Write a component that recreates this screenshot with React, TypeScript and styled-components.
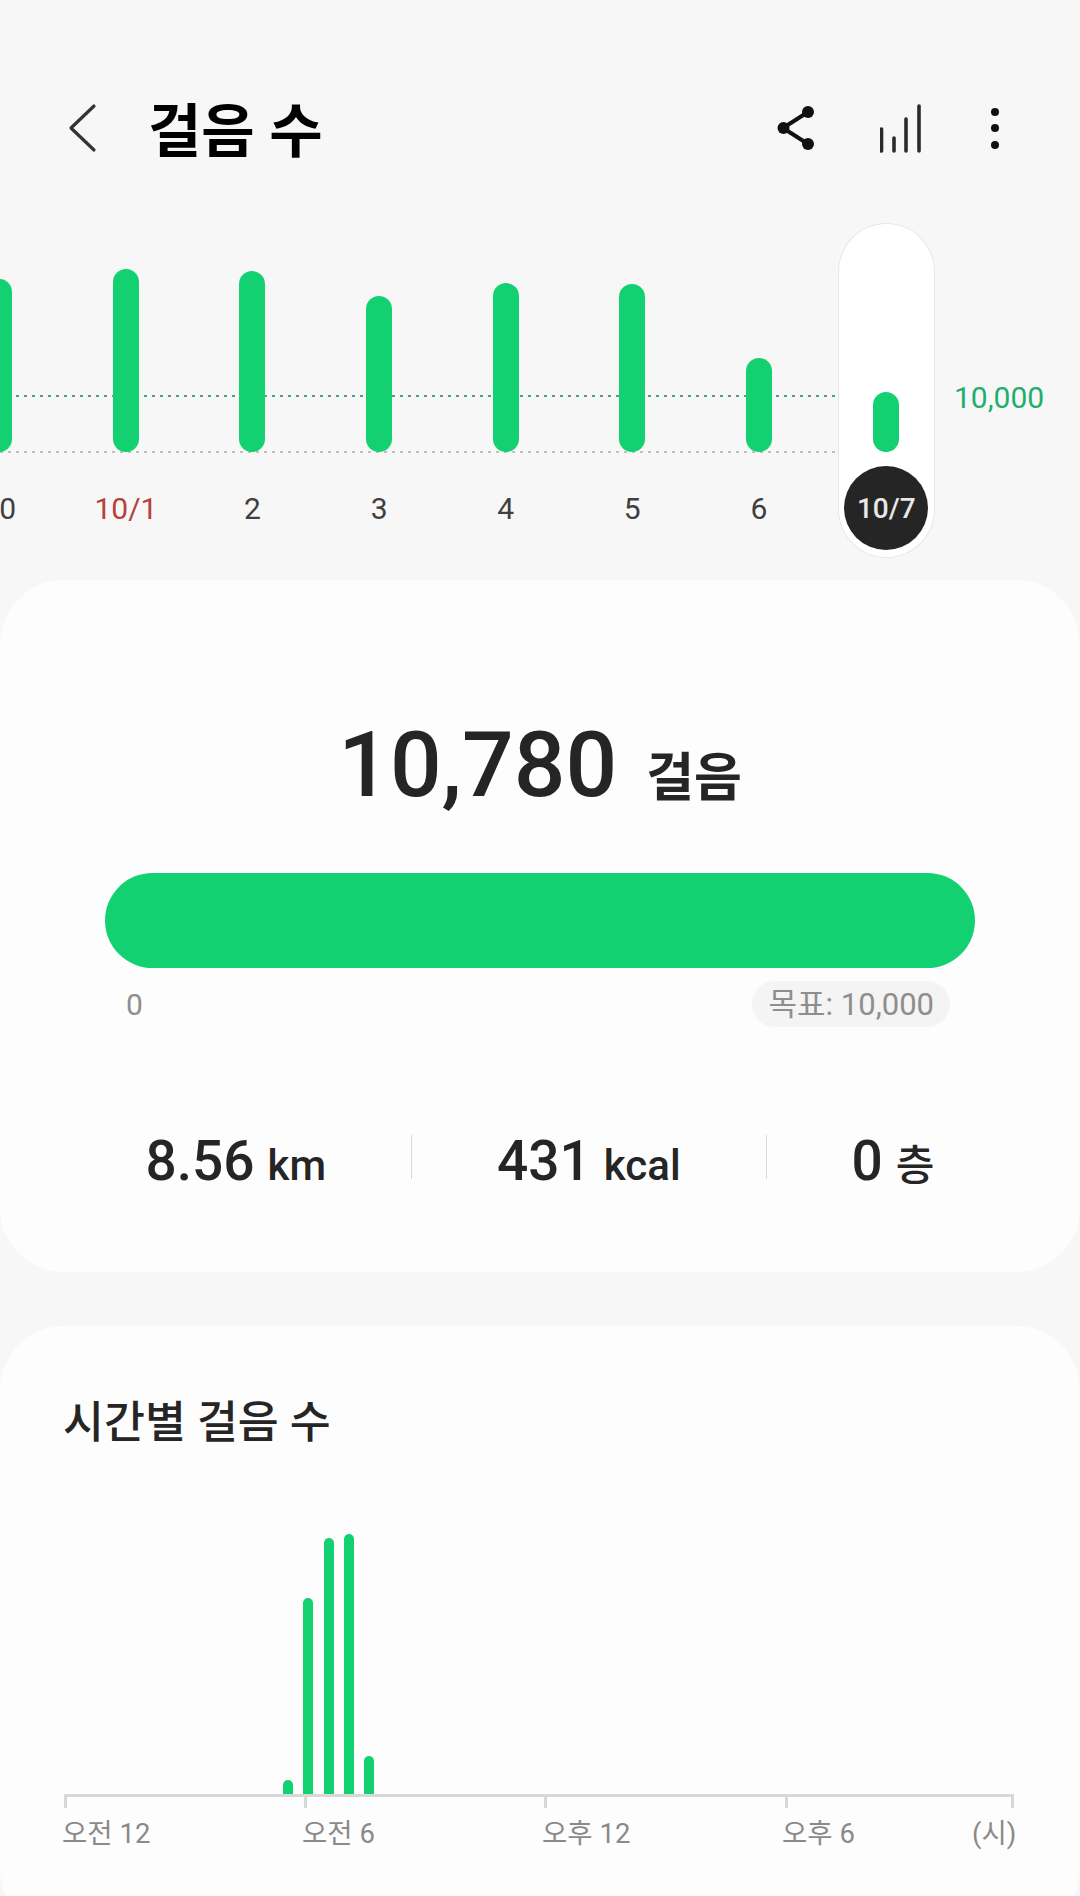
import React from "react";
import styled, { createGlobalStyle } from "styled-components";

const GREEN = "#13d170";
const FONT = `Roboto, "Noto Sans CJK KR", sans-serif`;

const GlobalStyle = createGlobalStyle`
  html, body {
    margin: 0;
    padding: 0;
    background: #f7f7f7;
  }
  body {
    font-family: ${FONT};
    color: #252525;
  }
`;

const Page = styled.div`
  width: 1080px;
  height: 1896px;
  overflow: hidden;
  background: #f7f7f7;
`;

const Header = styled.header`
  display: flex;
  align-items: center;
  height: 80px;
  padding: 88px 78px 55px 67px;
`;

const Title = styled.h1`
  margin: 0 0 0 51px;
  font-size: 58px;
  line-height: 80px;
  font-weight: 700;
  color: #000;
  position: relative;
  top: 4px;
`;

const Actions = styled.div`
  display: flex;
  align-items: center;
  gap: 64px;
  margin-left: auto;
`;

const Strip = styled.section`
  position: relative;
  width: 1080px;
  height: 335px;
  overflow: hidden;
`;

const DottedLine = styled.div<{ $top: number; $color: string }>`
  position: absolute;
  left: 0;
  top: ${(p) => p.$top}px;
  width: 838px;
  height: 2px;
  background-image: linear-gradient(to right, ${(p) => p.$color} 3px, transparent 3px);
  background-size: 8px 2px;
`;

const GoalLabel = styled.span`
  position: absolute;
  left: 954px;
  top: 153px;
  font-size: 30px;
  line-height: 44px;
  color: #1fae6e;
`;

const DayRow = styled.div`
  position: relative;
  display: flex;
  margin-left: -64px;
  height: 100%;
`;

const DayColumn = styled.div<{ $selected?: boolean }>`
  flex: none;
  display: flex;
  flex-direction: column;
  align-items: center;
  width: ${(p) => (p.$selected ? "97px" : "126.6px")};
  margin: ${(p) => (p.$selected ? "0 15.6px" : "0")};
  border-radius: 48.5px;
  background: ${(p) => (p.$selected ? "#fff" : "transparent")};
  box-shadow: ${(p) => (p.$selected ? "inset 0 0 0 1px #e6e6e6" : "none")};
`;

const DayBarSlot = styled.div`
  display: flex;
  align-items: flex-end;
  height: 229px;
`;

const DayBar = styled.div<{ $height: number }>`
  width: 26px;
  height: ${(p) => p.$height}px;
  border-radius: 13px;
  background: ${GREEN};
`;

const DayLabel = styled.div<{ $selected?: boolean; $red?: boolean }>`
  width: 84px;
  height: 84px;
  margin-top: 14px;
  border-radius: 50%;
  text-align: center;
  white-space: nowrap;
  line-height: 86px;
  font-size: ${(p) => (p.$selected ? "28px" : "30px")};
  font-weight: ${(p) => (p.$selected ? 500 : 400)};
  color: ${(p) => (p.$selected ? "#e8e8e8" : p.$red ? "#b8403a" : "#3f3f3f")};
  background: ${(p) => (p.$selected ? "#252525" : "transparent")};
`;

const Card = styled.section<{ $height: number }>`
  height: ${(p) => p.$height}px;
  box-sizing: border-box;
  border-radius: 64px;
  background: #fdfdfd;
`;

const SummaryCard = styled(Card)`
  margin-top: 22px;
  padding-top: 130px;
`;

const HourlyCard = styled(Card)`
  margin-top: 54px;
  padding: 68px 67px 0 63px;
`;

const TotalRow = styled.div`
  display: flex;
  justify-content: center;
  align-items: baseline;
  gap: 29px;
  height: 110px;
  line-height: 110px;
`;

const TotalValue = styled.span`
  font-size: 91px;
  font-weight: 500;
`;

const TotalUnit = styled.span`
  font-size: 52px;
  font-weight: 700;
`;

const ProgressBar = styled.div`
  height: 95px;
  margin: 53px 105px 0 105px;
  border-radius: 47.5px;
  background: ${GREEN};
`;

const ProgressFoot = styled.div`
  display: flex;
  align-items: center;
  justify-content: space-between;
  margin: 13px 130px 0 126px;
  font-size: 30px;
  color: #8e8e8e;
`;

const GoalPill = styled.span`
  height: 46px;
  padding: 0 16px 0 17px;
  border-radius: 23px;
  background: #f4f4f4;
  font-size: 31px;
  line-height: 47px;
  white-space: nowrap;
`;

const StatRow = styled.div`
  display: flex;
  justify-content: center;
  margin-top: 108px;
`;

const Stat = styled.div<{ $divider?: boolean }>`
  display: flex;
  align-items: baseline;
  gap: 13px;
  height: 44px;
  line-height: 52px;
  padding: 0 85px;
  border-left: ${(p) => (p.$divider ? "1px solid #d9d9d9" : "none")};
`;

const StatValue = styled.span`
  font-size: 55px;
  font-weight: 500;
`;

const StatUnit = styled.span`
  font-size: 42px;
  font-weight: 500;
`;

const CardTitle = styled.h2`
  margin: 0;
  font-size: 44.5px;
  line-height: 58px;
  font-weight: 500;
`;

const HourBars = styled.div`
  display: flex;
  align-items: flex-end;
  gap: 10.25px;
  height: 260px;
  margin-top: 82px;
  padding-left: 220px;
`;

const HourBar = styled.div<{ $height: number }>`
  width: 10px;
  height: ${(p) => p.$height}px;
  border-radius: 5px 5px 0 0;
  background: ${GREEN};
`;

const Axis = styled.div`
  display: flex;
  width: 950px;
  box-sizing: border-box;
  margin-left: 1px;
  border-top: 3px solid #d8d8d8;
`;

const AxisTick = styled.div<{ $width: number; $end?: boolean }>`
  flex: none;
  box-sizing: border-box;
  width: ${(p) => p.$width}px;
  height: 11px;
  border-left: 3px solid #d8d8d8;
  border-right: ${(p) => (p.$end ? "3px solid #d8d8d8" : "none")};
`;

const AxisLabels = styled.div`
  display: flex;
  justify-content: space-between;
  width: 951px;
  margin: 6px 0 0 -1px;
  font-size: 27.5px;
  line-height: 40px;
  color: #8a8a8a;
`;

const AxisLabel = styled.span<{ $width?: number }>`
  flex: none;
  width: ${(p) => (p.$width ? `${p.$width}px` : "auto")};
  white-space: nowrap;
`;

const days = [
  { label: "30", height: 173 },
  { label: "10/1", height: 183, red: true },
  { label: "2", height: 181 },
  { label: "3", height: 156 },
  { label: "4", height: 169 },
  { label: "5", height: 168 },
  { label: "6", height: 94 },
  { label: "10/7", height: 60, selected: true },
];

const hours = [14, 196, 256, 260, 38];

const App: React.FC = () => {
  return (
    <Page>
      <GlobalStyle />
      <Header>
        <svg width="30" height="50" viewBox="0 0 30 50" fill="none">
          <path d="M27 3 L4 25 L27 47" stroke="#333" strokeWidth="3.2" strokeLinecap="round" strokeLinejoin="round" />
        </svg>
        <Title>걸음 수</Title>
        <Actions>
          <svg width="40" height="46" viewBox="0 0 40 46" fill="#111" stroke="#111">
            <line x1="7" y1="23" x2="32" y2="7" strokeWidth="4" />
            <line x1="7" y1="23" x2="32" y2="39" strokeWidth="4" />
            <circle cx="7.5" cy="23" r="6" strokeWidth="0" />
            <circle cx="32" cy="7" r="6" strokeWidth="0" />
            <circle cx="32" cy="39" r="6" strokeWidth="0" />
          </svg>
          <svg width="44" height="50" viewBox="0 0 44 50" fill="none" stroke="#2a2a2a" strokeWidth="3.6" strokeLinecap="round">
            <line x1="1.5" y1="26" x2="1.5" y2="48" />
            <line x1="14" y1="35" x2="14" y2="48" />
            <line x1="26" y1="16" x2="26" y2="48" />
            <line x1="39" y1="3" x2="39" y2="48" />
          </svg>
          <svg width="14" height="46" viewBox="0 0 14 46" fill="#111">
            <circle cx="7" cy="7" r="4" />
            <circle cx="7" cy="23" r="4" />
            <circle cx="7" cy="40" r="4" />
          </svg>
        </Actions>
      </Header>

      <Strip>
        <DottedLine $top={172} $color="#3ea883" />
        <DottedLine $top={228} $color="#c0c0c0" />
        <GoalLabel>10,000</GoalLabel>
        <DayRow>
          {days.map((day) => (
            <DayColumn key={day.label} $selected={day.selected}>
              <DayBarSlot>
                <DayBar $height={day.height} />
              </DayBarSlot>
              <DayLabel $selected={day.selected} $red={day.red}>
                {day.label}
              </DayLabel>
            </DayColumn>
          ))}
        </DayRow>
      </Strip>

      <SummaryCard $height={692}>
        <TotalRow>
          <TotalValue>10,780</TotalValue>
          <TotalUnit>걸음</TotalUnit>
        </TotalRow>
        <ProgressBar />
        <ProgressFoot>
          <span>0</span>
          <GoalPill>목표: 10,000</GoalPill>
        </ProgressFoot>
        <StatRow>
          <Stat>
            <StatValue>8.56</StatValue>
            <StatUnit>km</StatUnit>
          </Stat>
          <Stat $divider>
            <StatValue>431</StatValue>
            <StatUnit>kcal</StatUnit>
          </Stat>
          <Stat $divider>
            <StatValue>0</StatValue>
            <StatUnit>층</StatUnit>
          </Stat>
        </StatRow>
      </SummaryCard>

      <HourlyCard $height={607}>
        <CardTitle>시간별 걸음 수</CardTitle>
        <HourBars>
          {hours.map((height, i) => (
            <HourBar key={i} $height={height} />
          ))}
        </HourBars>
        <Axis>
          <AxisTick $width={240} />
          <AxisTick $width={240} />
          <AxisTick $width={241} />
          <AxisTick $width={229} $end />
        </Axis>
        <AxisLabels>
          <AxisLabel $width={240}>오전 12</AxisLabel>
          <AxisLabel $width={240}>오전 6</AxisLabel>
          <AxisLabel $width={240}>오후 12</AxisLabel>
          <AxisLabel $width={190}>오후 6</AxisLabel>
          <AxisLabel>(시)</AxisLabel>
        </AxisLabels>
      </HourlyCard>
    </Page>
  );
};

export default App;
